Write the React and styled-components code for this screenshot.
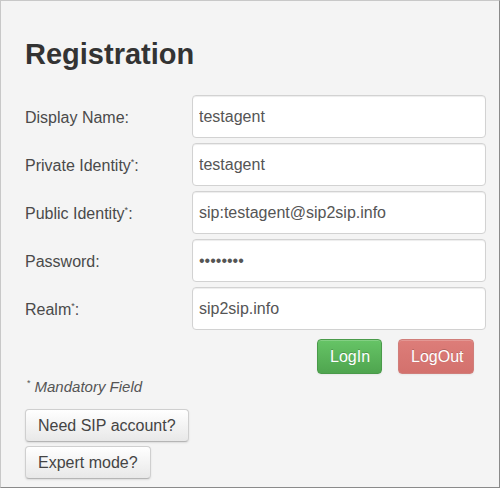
import React from "react";
import styled, { createGlobalStyle } from "styled-components";

const GlobalStyle = createGlobalStyle`
  html, body {
    margin: 0;
    padding: 0;
    background: #fff;
  }
  * {
    box-sizing: border-box;
  }
`;

const Panel = styled.div`
  width: 500px;
  height: 488px;
  background: #f4f4f4;
  border: 1px solid #c8c8c8;
  border-right-color: #8a8a8a;
  border-bottom-color: #8a8a8a;
  padding: 35px 0 0 24px;
  font-family: "Liberation Sans", Arial, sans-serif;
  color: #444;
  overflow: hidden;
`;

const Title = styled.h1`
  margin: 0 0 23px 0;
  font-size: 29px;
  line-height: 36px;
  font-weight: bold;
  color: #333;
`;

const Form = styled.div`
  display: grid;
  grid-template-columns: 167px 294px;
  grid-auto-rows: 43px;
  row-gap: 5px;
`;

const Label = styled.label`
  align-self: center;
  font-size: 16px;
  line-height: 20px;
  color: #4a4a4a;
  padding-top: 3px;
`;

const Star = styled.sup`
  font-size: 9px;
  line-height: 0;
  vertical-align: 6px;
`;

const Field = styled.input`
  width: 100%;
  height: 43px;
  margin: 0;
  padding: 0 6px;
  font-family: "Liberation Sans", Arial, sans-serif;
  font-size: 16px;
  color: #555;
  background: #fff;
  border: 1px solid #d2d2d2;
  border-radius: 4px;
  box-shadow: inset 0 1px 1px rgba(0, 0, 0, 0.075);
  outline: none;
`;

const Actions = styled.div`
  display: flex;
  gap: 16px;
  width: 449px;
  justify-content: flex-end;
  margin-top: 9px;
`;

const ActionButton = styled.button`
  height: 35px;
  padding: 0 12px;
  font-family: "Liberation Sans", Arial, sans-serif;
  font-size: 16px;
  color: #fff;
  border-radius: 4px;
  text-shadow: 0 -1px 0 rgba(0, 0, 0, 0.2);
  border: 1px solid ${(p) => (p.$variant === "ok" ? "#4a9a4a" : "#d07e7a")};
  background: ${(p) =>
    p.$variant === "ok"
      ? "linear-gradient(to bottom, #66c466, #4fa54f)"
      : "linear-gradient(to bottom, #dd7d79, #d3716d)"};
  box-shadow: inset 0 1px 0 rgba(255, 255, 255, 0.2), 0 1px 2px rgba(0, 0, 0, 0.05);
  cursor: pointer;
  width: ${(p) => p.$w}px;
`;

const Note = styled.div`
  margin: 3px 0 0 2px;
  font-size: 15px;
  line-height: 20px;
  color: #555;
`;

const NoteText = styled.em`
  margin-left: 4px;
`;

const Extras = styled.div`
  display: flex;
  flex-direction: column;
  align-items: flex-start;
  gap: 4px;
  margin-top: 12px;
`;

const PlainButton = styled.button`
  height: 33px;
  padding: 0 12px;
  font-family: "Liberation Sans", Arial, sans-serif;
  font-size: 16px;
  color: #444;
  background: linear-gradient(to bottom, #ffffff, #e8e8e8);
  border: 1px solid #cfcfcf;
  border-bottom-color: #b5b5b5;
  border-radius: 4px;
  box-shadow: inset 0 1px 0 rgba(255, 255, 255, 0.2), 0 1px 2px rgba(0, 0, 0, 0.1);
  cursor: pointer;
`;

const fields = [
  { label: "Display Name", value: "testagent" },
  { label: "Private Identity", value: "testagent", required: true },
  { label: "Public Identity", value: "sip:testagent@sip2sip.info", required: true },
  { label: "Password", value: "testagen", type: "password" },
  { label: "Realm", value: "sip2sip.info", required: true },
];

export default function App() {
  return (
    <>
      <GlobalStyle />
      <Panel>
        <Title>Registration</Title>
        <Form>
          {fields.map((f) => (
            <React.Fragment key={f.label}>
              <Label>
                {f.label}
                {f.required && <Star>*</Star>}:
              </Label>
              <Field type={f.type || "text"} defaultValue={f.value} readOnly />
            </React.Fragment>
          ))}
        </Form>
        <Actions>
          <ActionButton $variant="ok" $w={65}>LogIn</ActionButton>
          <ActionButton $variant="off" $w={76}>LogOut</ActionButton>
        </Actions>
        <Note>
          <Star>*</Star>
          <NoteText>Mandatory Field</NoteText>
        </Note>
        <Extras>
          <PlainButton>Need SIP account?</PlainButton>
          <PlainButton>Expert mode?</PlainButton>
        </Extras>
      </Panel>
    </>
  );
}
